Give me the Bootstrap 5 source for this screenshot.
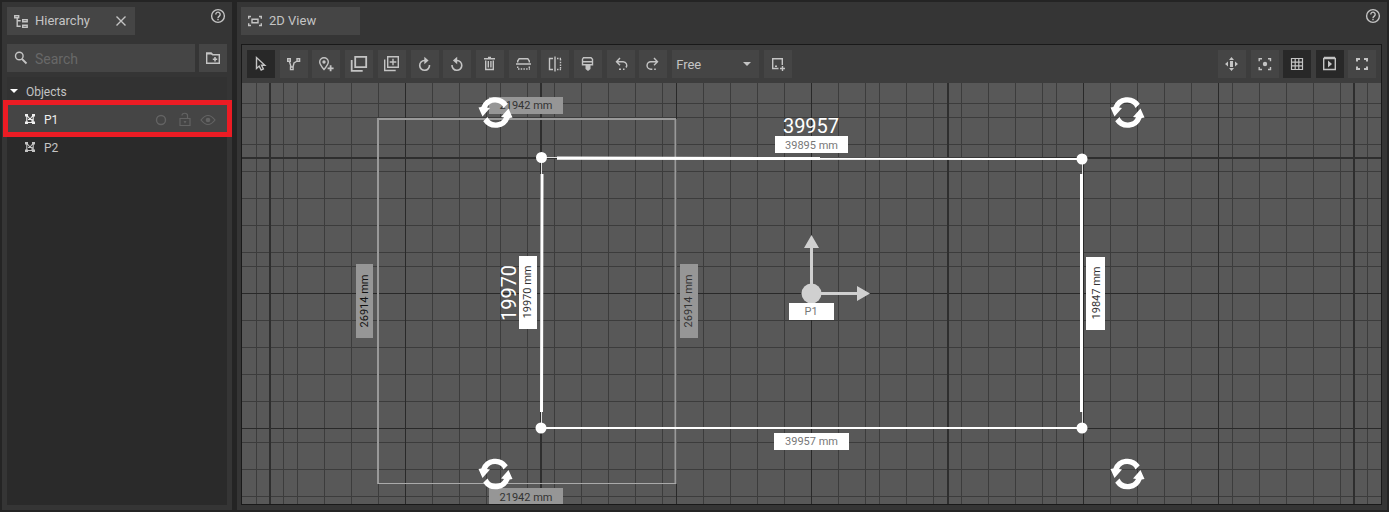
<!DOCTYPE html>
<html lang="en">
<head>
<meta charset="utf-8">
<meta name="viewport" content="width=device-width, initial-scale=1">
<title>2D View</title>
<link href="https://cdn.jsdelivr.net/npm/bootstrap@5.3.0/dist/css/bootstrap.min.css" rel="stylesheet">
<style>
  body { background: #242424; color: #c4c4c4; font-family: Roboto, "Liberation Sans", sans-serif; font-size: 14px; line-height: 20px; }
  .app-shell { padding: 2px; gap: 5px; }
  .pane { background: #353535; padding: 5px; }
  .pane-side { width: 230px; }
  .pane-main { min-width: 0; padding: 5px 5px 5px 4px; }
  .pane-tab { background: #454545; height: 28px; padding: 0 7px; gap: 7px; font-size: 13px; }
  .tab-side { width: 128px; }
  .tab-main { width: 119px; }
  .help-btn { width: 18px; height: 18px; }
  .plain-btn { background: none; border: 0; padding: 0; color: inherit; line-height: 0; }
  .search-row { margin-top: 9px; }
  .field { background: #454545; height: 28px; }
  .field svg { flex: none; }
  .field input { background: transparent; border: 0; color: #c4c4c4; outline: 0; font-size: 14px; padding: 2px 0 0; min-width: 0; }
  .field input::placeholder { color: #686868; opacity: 1; }
  .tool { width: 28px; height: 28px; background: #454545; border: 0; padding: 0; color: #c4c4c4; line-height: 0; border-radius: 0; }
  .tool.on { background: #282828; }
  .tree { background: #2a2a2a; margin-top: 5px; }
  .tree-row { height: 28px; font-size: 12px; }
  .tree-row span { padding-top: 1px; }
  .tree-head { background: #323232; padding-left: 2px; gap: 6px; }
  .tree-item { padding: 0 11px 0 17px; gap: 8px; }
  .tree-item.picked { background: #454545; color: #f0f0f0; }
  .mark-frame { position: absolute; inset: -5px -5px -4px -4px; border: 5px solid #ec1c24; z-index: 2; pointer-events: none; }
  .dim { color: #636363; gap: 7px; }
  .view { border: 1px solid #191919; margin-top: 9px; }
  .tool-strip { background: #3d3d3d; height: 38px; padding: 0 5px; }
  .strip-edit { width: 545px; }
  .strip-show { width: 158px; }
  .mode-select { width: 87px; height: 28px; background: #454545; border: 0; color: #c4c4c4; font-size: 13px; padding: 2px 4px 0; appearance: none; border-radius: 0; }
  .mode-wrap::after { content: ""; position: absolute; right: 8px; top: 12px; border: 4px solid transparent; border-top-color: #c4c4c4; pointer-events: none; }
  .stage { background: #585858; min-height: 0; }
  .stage svg { font-family: Roboto, "Liberation Sans", sans-serif; font-size: 11px; }
  .ico { fill: none; stroke: currentColor; stroke-width: 1.4; }
  .solid { fill: currentColor; stroke: none; }
</style>
</head>
<body>
<svg width="0" height="0" class="position-absolute" aria-hidden="true">
  <symbol id="help" viewBox="0 0 18 18"><circle cx="9" cy="9" r="6.4" fill="none" stroke="currentColor" stroke-width="1.4"/><path d="M6.8 7.5a2.2 2.2 0 1 1 3.5 1.6c-.9.7-1.3 1-1.3 2M9 11.8v1.5" fill="none" stroke="currentColor" stroke-width="1.4"/></symbol>
  <symbol id="poly" viewBox="0 0 12 12"><path d="M3 2.500L6 6l3-3.500M2.800 3v6M9.200 3v6M3 9.500h6M4 6.500h4v2.500" fill="none" stroke="currentColor" stroke-width="1.100"/><path d="M1 1h3v2.500H1zM8 1h3v2.500H8zM1 8.500h3V11H1zM8 8.500h3V11H8z" fill="currentColor"/></symbol>
  <symbol id="spin" viewBox="-18 -18 36 36">
    <path fill="#fff" d="M-17-5L-14.200-5.400A15 15 0 0 1 12.300-8.700L8-4.500A9.200 9.200 0 0 0-8.500-5L-5.500-4.500-13 4z"/>
    <path fill="#fff" transform="rotate(180)" d="M-17-5L-14.200-5.400A15 15 0 0 1 12.300-8.700L8-4.500A9.200 9.200 0 0 0-8.500-5L-5.500-4.500-13 4z"/>
  </symbol>
</svg>

<div class="app-shell d-flex vh-100">
  <aside class="pane pane-side d-flex flex-column flex-shrink-0">
    <div class="d-flex justify-content-between">
      <div class="pane-tab tab-side d-flex align-items-center">
        <svg class="ico" width="14" height="14"><path d="M.7 1.700h4v2h-4zM8.700 5.700h4.500v2H8.700zM8.700 11.300h4.500v2H8.700zM3.200 4v8.300h3.500M3.200 6.700h3.500"/></svg>
        <span class="flex-grow-1">Hierarchy</span>
        <button class="plain-btn" aria-label="Close"><svg class="ico" width="14" height="14"><path d="M2.500 2.500l9 9M11.500 2.500l-9 9"/></svg></button>
      </div>
      <button class="plain-btn help-btn" aria-label="Help"><svg width="18" height="18"><use href="#help"/></svg></button>
    </div>
    <div class="search-row d-flex gap-1">
      <label class="field d-flex align-items-center flex-grow-1">
        <svg class="ico" width="28" height="28"><circle cx="12.300" cy="12" r="3.800"/><path d="M15 15l4.500 4.500" stroke-width="1.800"/></svg>
        <input class="flex-grow-1 w-100" type="text" placeholder="Search" aria-label="Search">
      </label>
      <button class="tool" aria-label="New folder"><svg class="ico" width="28" height="28"><path d="M7.700 9.200h4.500l1.500 1.500h6.600v8.600H7.700z"/><path class="solid" d="M7 8.500h5.500l1.500 2H7zM15.200 13h1.600v1.400h1.400V16h-1.400v1.400h-1.600V16h-1.400v-1.600h1.400z"/></svg></button>
    </div>
    <div class="tree flex-grow-1">
      <div class="tree-row tree-head d-flex align-items-center">
        <svg class="solid" width="11" height="10"><path d="M1 3h8L5 7z" fill="#fff"/></svg><span>Objects</span>
      </div>
      <div class="tree-row tree-item picked d-flex align-items-center position-relative">
        <svg width="12" height="12"><use href="#poly"/></svg><span class="flex-grow-1">P1</span>
        <span class="dim d-flex">
          <svg class="ico" width="16" height="16"><circle cx="7" cy="8" r="4.500"/></svg>
          <svg class="ico" width="16" height="16"><path d="M3 6.500h10v7H3zM5 3.500C5 .5 10.500.5 10.500 3.500v3" stroke-width="1.200"/><path class="solid" d="M6.500 9h3L8 11.500z"/></svg>
          <svg class="ico" width="16" height="16"><path d="M1 8q7-9 14 0q-7 9-14 0z" stroke-width="1.200"/><circle class="solid" cx="8" cy="8" r="2.300"/></svg>
        </span>
        <div class="mark-frame"></div>
      </div>
      <div class="tree-row tree-item d-flex align-items-center">
        <svg width="12" height="12"><use href="#poly"/></svg><span>P2</span>
      </div>
    </div>
  </aside>

  <main class="pane pane-main d-flex flex-column flex-grow-1">
    <div class="d-flex justify-content-between">
      <div class="pane-tab tab-main d-flex align-items-center">
        <svg class="ico" width="14" height="14"><path d="M3 2.500H.7v2.300M11 2.500h2.300v2.300M3 11.500H.7V9.200M11 11.500h2.300V9.200M4 5.200h6v3.600H4z"/></svg>
        <span>2D View</span>
      </div>
      <button class="plain-btn help-btn" aria-label="Help"><svg width="18" height="18"><use href="#help"/></svg></button>
    </div>
    <div class="view d-flex flex-column flex-grow-1">
      <div class="tool-strip d-flex align-items-center justify-content-between">
        <div class="strip-edit d-flex justify-content-between">
          <button class="tool on" aria-label="Select"><svg class="ico" width="28" height="28"><path d="M9.500 7.500v11l2.700-2.400 2 4 2.200-1.100-1.900-3.800h3.300z"/></svg></button>
          <button class="tool" aria-label="Edit points"><svg class="ico" width="28" height="28"><path d="M7.700 8.700h2.600v2.600H7.700zM17 8.700h2.600v2.600H17zM10.500 17h2.600v2.600h-2.600zM9.400 11.500l1.700 5.500M13 17l1-4 3.200-2"/></svg></button>
          <button class="tool" aria-label="Add pin"><svg class="ico" width="28" height="28"><path d="M12 19.500C9 16 7.700 14 7.700 12a4.300 4.300 0 0 1 8.600 0c0 2-1.300 4-4.300 7.500z"/><circle class="solid" cx="12" cy="12" r="1.700"/><path d="M18.600 15.300v6M15.600 18.300h6" stroke-width="1.800"/></svg></button>
          <button class="tool" aria-label="Copy"><svg class="ico" width="28" height="28"><path d="M10.200 6.800h11v10.400h-11zM6.700 10v10.800h11" stroke-width="1.800"/></svg></button>
          <button class="tool" aria-label="Duplicate"><svg class="ico" width="28" height="28"><path d="M9.700 6.700h10.600v10.600H9.700zM6.700 9.500v11h11M15 8.700v6.600M11.700 12h6.600"/></svg></button>
          <button class="tool" aria-label="Rotate right"><svg class="ico" width="28" height="28"><path d="M14.500 10.500h-1a4.900 4.900 0 1 0 5 4.500" stroke-width="1.600"/><path class="solid" d="M13.300 6.700l4.300 3.800-4.300 3.700z"/></svg></button>
          <button class="tool" aria-label="Rotate left"><svg class="ico" width="28" height="28"><path d="M13 10.500h1a4.900 4.900 0 1 1-5 4.500" stroke-width="1.600"/><path class="solid" d="M14.200 6.700l-4.300 3.800 4.300 3.700z"/></svg></button>
          <button class="tool" aria-label="Delete"><svg class="ico" width="28" height="28"><path d="M8 8.700h11M12 7.500h3M9.700 10.500v9h7.600v-9M12.300 11v6.500M14.900 11v6.500"/></svg></button>
          <button class="tool" aria-label="Mirror vertical"><svg class="ico" width="28" height="28"><path d="M7 14h15M8.700 12.500V11l1.500-2.300h8.600L20.300 11v1.500"/><path d="M8.700 16.500v2M20.300 16.500v2M9 19h12" stroke-dasharray="1.500 1.200"/></svg></button>
          <button class="tool" aria-label="Mirror horizontal"><svg class="ico" width="28" height="28"><path d="M14 6.500v15M12 8.500H8.500v11H12"/><path d="M16 8.500h4M16 19.500h4M19.500 9v11" stroke-dasharray="1.500 1.200"/></svg></button>
          <button class="tool" aria-label="Paint style"><svg class="ico" width="28" height="28"><path d="M9.500 7.700h7.500l1.500 1.500v5.500h-10v-5.500zM8.500 11.700h10"/><path class="solid" d="M11.500 15h5v4l-2.500 2-2.500-2z"/></svg></button>
          <button class="tool" aria-label="Undo"><svg class="ico" width="28" height="28"><path d="M13 8l-3.500 3.700 3.500 3.500M9.500 11.700h6.700a3.600 3.600 0 0 1 2.800 5.800M17.500 19.200h-1.500M14 19.200h-2"/></svg></button>
          <button class="tool" aria-label="Redo"><svg class="ico" width="28" height="28"><path d="M15 8l3.500 3.700-3.500 3.500M18.500 11.700h-6.700a3.700 3.700 0 0 0 0 7.500h1.500M15.200 19.200h1.600"/></svg></button>
          <div class="mode-wrap position-relative"><select class="mode-select" aria-label="Mode"><option>Free</option></select></div>
          <button class="tool" aria-label="Add area"><svg class="ico" width="28" height="28"><path d="M14.500 18.500H8.700V8.700h9.600V15M16 18.500h5M18.500 16v5M11 16.300h2"/></svg></button>
        </div>
        <div class="strip-show d-flex justify-content-between">
          <button class="tool" aria-label="Pan"><svg class="solid" width="28" height="28"><path d="M12 11h3v6h-3zM13.500 7l2.500 3h-5zM13.500 21l2.500-3h-5zM7 14l3-2.500v5zM20 14l-3-2.500v5z"/></svg></button>
          <button class="tool" aria-label="Focus"><svg class="ico" width="28" height="28"><path d="M11 8.700H8.200v2.500M17 8.700h2.500v2.500M11 19.500H8.200V17M17 19.500h2.500V17"/><circle class="solid" cx="14" cy="14" r="2.200"/></svg></button>
          <button class="tool on" aria-label="Grid"><svg class="ico" width="28" height="28"><path d="M8.500 8.500h11v11h-11zM12.200 8.500v11M15.800 8.500v11M8.500 12.200h11M8.500 15.800h11" stroke-width="1.200"/></svg></button>
          <button class="tool on" aria-label="Preview"><svg class="ico" width="28" height="28"><path d="M7.700 8.500h11.600v11H7.700zM8 7.500h11"/><path class="solid" d="M12 10.500l4 3.500-4 3.500z"/></svg></button>
          <button class="tool" aria-label="Full screen"><svg class="ico" width="28" height="28"><path d="M12 9H9v2.500M16 9h3v2.500M12 19H9v-2.500M16 19h3v-2.500" stroke-width="2"/></svg></button>
        </div>
      </div>
      <div class="stage flex-grow-1 overflow-hidden position-relative">
        <svg class="position-absolute w-100 h-100" role="img" aria-label="Floor plan">
          <g transform="translate(-242 -83)">
            <!-- grid -->
            <path id="minor" stroke="#3c3c3c" stroke-width="1" fill="none"/>
            <path id="major" stroke="#292929" stroke-width="1" fill="none"/>
            <path stroke="#2e2e2e" stroke-width="2" d="M270 83V504M541 83V504M948 83V504M1354 83V504M242 158H1381"/>
            <!-- background object -->
            <path d="M676 119H378V484" fill="none" stroke="#999" stroke-width="2"/>
            <path d="M675.500 119V484" stroke="#999" stroke-width="2"/>
            <path d="M378 483.500H676" stroke="#aaa"/>
            <g fill="#969696"><path d="M489 97h74v17h-74zM489 488h74v17h-74zM356 264h17v74h-17zM680 264h18v74h-18z"/></g>
            <g fill="#333" text-anchor="middle">
              <text x="526" y="109">21942 mm</text><text x="526" y="501">21942 mm</text>
              <text transform="translate(368 301) rotate(-90)" fill="#111">26914 mm</text>
              <text transform="translate(692 301) rotate(-90)">26914 mm</text>
            </g>
            <!-- selected object -->
            <g stroke="#fff" fill="none">
              <path d="M541 157.500H558M541.500 158V428M1082.500 159V428" stroke="#ddd"/>
              <path d="M557 158.500L1082 159M541 428H1082" stroke-width="2"/>
              <path d="M557 158L820 158.500M542 174L541.500 412M1081.500 174V412" stroke-width="3"/>
            </g>
            <g fill="#fff">
              <circle cx="541.500" cy="157.500" r="5.500"/><circle cx="1082" cy="159" r="5.500"/><circle cx="541" cy="428" r="5.500"/><circle cx="1082" cy="428" r="5.500"/>
              <path d="M775 136h73v17h-73zM774 433h75v17h-75zM519 256h18v73h-18zM1086 257h19v73h-19z"/>
              <g font-size="20" text-anchor="middle"><text x="811" y="133">39957</text><text transform="translate(516 293) rotate(-90)">19970</text></g>
            </g>
            <g fill="#777" text-anchor="middle">
              <text x="811.500" y="149">39895 mm</text><text x="811.500" y="445">39957 mm</text>
              <text transform="translate(531 292) rotate(-90)" fill="#333">19970 mm</text>
              <text transform="translate(1100 293) rotate(-90)" fill="#333">19847 mm</text>
            </g>
            <!-- move gizmo -->
            <g fill="#d0d0d0"><circle cx="811.500" cy="293.500" r="10"/><path d="M810 247h3v46h-3zM804 248l7.500-13 7.500 13zM811 292h47v3h-47zM857 286l13 7.500-13 7.500z"/></g>
            <path d="M789 303h45v17h-45z" fill="#fff"/><text x="811" y="315" fill="#777" text-anchor="middle">P1</text>
            <!-- rotate handles -->
            <use href="#spin" x="477.500" y="94.500" width="36" height="36"/><use href="#spin" x="1109.500" y="94.500" width="36" height="36"/>
            <use href="#spin" x="477.500" y="456" width="36" height="36"/><use href="#spin" x="1109.500" y="456" width="36" height="36"/>
          </g>
        </svg>
      </div>
    </div>
  </main>
</div>
<script src="https://cdn.jsdelivr.net/npm/bootstrap@5.3.0/dist/js/bootstrap.bundle.min.js"></script>
<script>
  const columns = v => v.map(x => `M${x + .5} 83V504`).join("");
  const rows = v => v.map(y => `M242 ${y + .5}H1381`).join("");
  document.getElementById("minor").setAttribute("d",
    columns([256,283,297,324,351,378,432,459,486,500,527,554,581,608,635,662,703,730,757,784,838,865,879,906,933,961,988,1015,1042,1056,1110,1137,1164,1191,1232,1259,1286,1313,1340,1367]) +
    rows([103,117,144,171,198,225,252,266,320,347,374,401,442,469,496]));
  document.getElementById("major").setAttribute("d",
    columns([405,676,811,1083,1218]) + rows([293,428]));
</script>
</body>
</html>
